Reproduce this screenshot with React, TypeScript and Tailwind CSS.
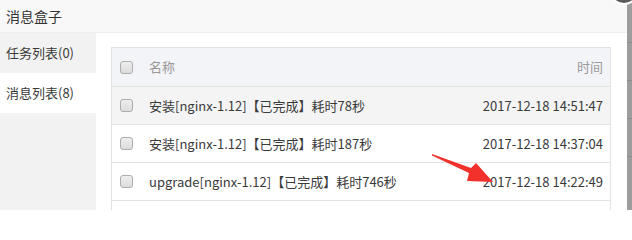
import React from 'react'

type Row = { name: string; time: string; hover?: boolean }

const rows: Row[] = [
  { name: '安装[nginx-1.12]【已完成】耗时78秒', time: '2017-12-18 14:51:47', hover: true },
  { name: '安装[nginx-1.12]【已完成】耗时187秒', time: '2017-12-18 14:37:04' },
  { name: 'upgrade[nginx-1.12]【已完成】耗时746秒', time: '2017-12-18 14:22:49' },
  { name: '', time: '' },
]

const font = { fontFamily: '"Noto Sans CJK SC", sans-serif' }

function Checkbox() {
  return (
    <span className="block w-[13px] h-[13px] rounded-[3px] border border-[#adadad] bg-gradient-to-b from-[#eeeeee] to-[#dcdcdc]" />
  )
}

export default function App() {
  return (
    <div className="relative w-[632px] h-[210px] overflow-hidden bg-white text-[#3a3a3a]" style={font}>
      <div className="flex h-full">
        {/* message box layer */}
        <div className="flex-1 flex flex-col bg-white">
          <div className="h-[33px] shrink-0 bg-[#f8f8f8] border-b border-[#eeeeee] px-[6px] flex items-center text-[14px] text-[#333]">
            消息盒子
          </div>
          <div className="flex flex-1 min-h-0">
            <div className="w-[96px] shrink-0 bg-[#f2f2f2] text-[13px]">
              <div className="h-[40px] px-[6px] flex items-center">任务列表(0)</div>
              <div className="h-[40px] px-[6px] flex items-center bg-white">消息列表(8)</div>
            </div>
            <div className="flex-1 pl-[15px] pr-[16px] pt-[14px]">
              <div className="border-x border-t border-[#e2e2e2] text-[13px]">
                <div className="h-[39px] flex items-center bg-[#f3f4f8] border-b border-[#e2e2e2] pl-[8px] pr-[7px] text-[#999]">
                  <Checkbox />
                  <span className="ml-[16px] flex-1">名称</span>
                  <span>时间</span>
                </div>
                {rows.map((r, i) => (
                  <div
                    key={i}
                    className={`h-[38px] flex items-center border-b border-[#e2e2e2] pl-[8px] pr-[7px] ${r.hover ? 'bg-[#f4f4f4]' : 'bg-white'}`}
                  >
                    <Checkbox />
                    <span className="ml-[16px] flex-1 whitespace-nowrap">{r.name}</span>
                    <span className="whitespace-nowrap">{r.time}</span>
                  </div>
                ))}
              </div>
            </div>
          </div>
        </div>
        {/* page behind the layer */}
        <div className="w-[5px] shrink-0 bg-[#9d9d9d] flex flex-col pt-[42px]">
          {[0, 1, 2, 3].map((i) => (
            <div key={i} className="h-[38px] shrink-0 border-t border-[#8a8a8a]" />
          ))}
        </div>
      </div>

      {/* close button */}
      <span className="absolute left-[609px] top-[-25px] w-[30px] h-[30px] rounded-full bg-[#5c5c5c] border-2 border-white" />

      {/* red arrow */}
      <svg className="absolute left-0 top-0" width="632" height="210" viewBox="0 0 632 210">
        <polygon points="432,154 471,168 476,163 493,182 467,181 469,173 432,155.5" fill="#f2302c" />
      </svg>
    </div>
  )
}
